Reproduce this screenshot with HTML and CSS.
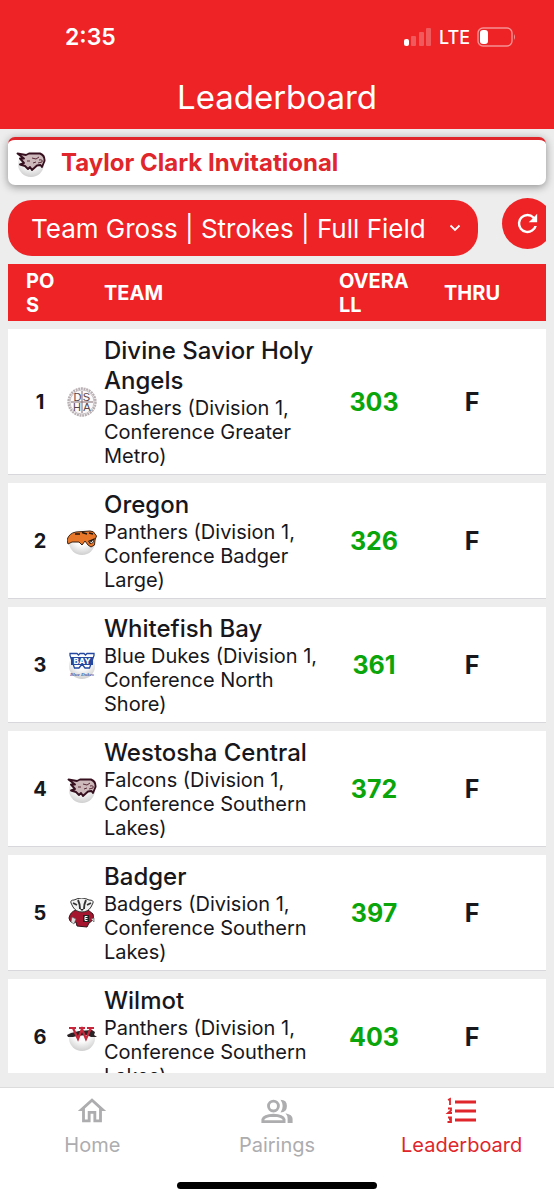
FILE: index.html
```html
<!DOCTYPE html>
<html lang="en">
<head>
  <meta charset="UTF-8">
  <meta name="viewport" content="width=device-width, initial-scale=1">
  <title>Leaderboard</title>
  <link rel="stylesheet" href="styles.css">
</head>
<body>
  <!-- shared logos -->
  <svg class="defs" width="0" height="0" aria-hidden="true">
    <defs>
      <radialGradient id="ball" cx="50%" cy="30%" r="70%">
        <stop offset="0.5" stop-color="#fbfbfb"/>
        <stop offset="1" stop-color="#cfcfcf"/>
      </radialGradient>
      <symbol id="falcon" viewBox="0 0 30 30">
        <circle cx="15" cy="16" r="13" fill="url(#ball)"/>
        <path d="M1.500 5.500 L10 7 L13 5.500 L24 5.500 Q29 7.500 28.500 13 L26 19 L24.500 17 L21 17.500 L16 22 L14 19 L12 21 L9 18 L4 16.500 L8 15 L4 10.500 L8 10.500 Z" fill="#cdb9bc" stroke="#36101f" stroke-width="1.900" stroke-linejoin="round"/>
        <path d="M16 10 L20 11 L23 9 M11 13 L14 13 M23 12 Q27 11 26 14 L22 15 M17 15 L20 14" fill="none" stroke="#5a2a38" stroke-width="1"/>
      </symbol>
    </defs>
  </svg>

  <header class="top">
    <div class="status">
      <span class="time">2:35</span>
      <div class="signals">
        <svg width="28" height="18" viewBox="0 0 28 18" fill="#fff">
          <rect x="0" y="11" width="5" height="7" rx="2"/>
          <g opacity="0.25">
            <rect x="7" y="8" width="5" height="10" rx="1"/>
            <rect x="15" y="4" width="5" height="14" rx="1"/>
            <rect x="22" y="0" width="5" height="18" rx="1"/>
          </g>
        </svg>
        <span class="network">LTE</span>
        <svg width="40" height="20" viewBox="0 0 40 20">
          <rect x="1" y="1" width="34" height="18" rx="5" fill="none" stroke="#fff" stroke-opacity="0.5" stroke-width="1.4"/>
          <path d="M37 7 Q39 10 37 13 Z" fill="#fff" fill-opacity="0.5"/>
          <rect x="3" y="3" width="8" height="14" rx="3" fill="#fff"/>
        </svg>
      </div>
    </div>
    <h1>Leaderboard</h1>
  </header>

  <main>
    <div class="event">
      <svg class="logo" viewBox="0 0 30 30"><use href="#falcon"/></svg>
      <h2>Taylor Clark Invitational</h2>
    </div>

    <div class="filters">
      <div class="picker">
        <select aria-label="Leaderboard view">
          <option>Team Gross | Strokes | Full Field</option>
        </select>
        <svg width="12" height="8" viewBox="0 0 12 8"><path d="M1.500 1.500 L6 6 L10.500 1.500" fill="none" stroke="#fff" stroke-width="1.8"/></svg>
      </div>
      <button class="refresh" aria-label="Refresh">
        <svg width="29" height="29" viewBox="0 0 24 24" fill="#fff"><path d="M17.650 6.350A7.960 7.960 0 0 0 12 4a8 8 0 1 0 7.730 10h-2.080A6 6 0 1 1 12 6c1.660 0 3.140.690 4.220 1.780L13 11h7V4l-2.350 2.350z"/></svg>
      </button>
    </div>

    <div class="board">
      <table>
        <thead>
          <tr>
            <th class="pos">POS</th>
            <th class="mark"></th>
            <th class="team">TEAM</th>
            <th class="overall">OVERALL</th>
            <th class="thru">THRU</th>
          </tr>
        </thead>
        <tbody>
          <tr>
            <td class="pos">1</td>
            <td class="mark">
              <svg class="logo" viewBox="0 0 30 30">
                <circle cx="15" cy="15" r="13.500" fill="#fff" stroke="#b9b0b4" stroke-width="2.400" stroke-dasharray="2 0.700"/>
                <circle cx="15" cy="15" r="12" fill="#fbf9fa" stroke="#a79da2" stroke-width="0.600"/>
                <path d="M15 4 V26 M4 15 H26" stroke="#806a70" stroke-width="1"/>
                <g font-family="Liberation Sans, sans-serif" font-size="11" fill="#57464e" text-anchor="middle">
                  <text x="10.500" y="13.500">D</text><text x="19.500" y="13.500">S</text>
                  <text x="10" y="24">H</text><text x="20" y="24">A</text>
                </g>
              </svg>
            </td>
            <td class="team"><div class="name">Divine Savior Holy Angels</div><div class="info">Dashers (Division 1, Conference Greater Metro)</div></td>
            <td class="overall">303</td>
            <td class="thru">F</td>
          </tr>
          <tr>
            <td class="pos">2</td>
            <td class="mark">
              <svg class="logo" viewBox="0 0 30 30">
                <circle cx="15" cy="16" r="13" fill="url(#ball)"/>
                <path d="M0 14 Q2 7 9 6 L23 5 Q27 5 28 8 L29.500 10 L28 14 L27.500 19 L24 21 L21 19 L18 15 L15 19 L12 16 L5 16 L1 18 Z" fill="#e8772a" stroke="#3c2313" stroke-width="1"/>
                <path d="M8 8 L13 8 M15 6.500 L20 8 M22 7 L26 8" stroke="#24170f" stroke-width="1.400"/>
                <path d="M21 15 L28 12 L26 17 L23 18 Z" fill="#24170f"/>
                <path d="M23 15.500 L24.500 17 L26 14.500" fill="none" stroke="#fff" stroke-width="1"/>
              </svg>
            </td>
            <td class="team"><div class="name">Oregon</div><div class="info">Panthers (Division 1, Conference Badger Large)</div></td>
            <td class="overall">326</td>
            <td class="thru">F</td>
          </tr>
          <tr>
            <td class="pos">3</td>
            <td class="mark">
              <svg class="logo" viewBox="0 0 30 30">
                <circle cx="15" cy="16" r="13" fill="url(#ball)"/>
                <path d="M3 3.500 H10 L11.500 5 L13 3.500 H17 L18.500 5 L20 3.500 H27 V5.500 L22.500 18 H18 L15 14 L12 18 H7.500 L3 5.500 Z" fill="#fff" stroke="#2448a0" stroke-width="1.300"/>
                <rect x="4" y="7" width="22" height="8" fill="#2448a0"/>
                <text x="15" y="14" font-family="Inter, sans-serif" font-size="8" font-weight="800" fill="#fff" text-anchor="middle">BAY</text>
                <text x="15" y="26" font-family="Liberation Serif, serif" font-size="5" font-style="italic" font-weight="700" fill="#3d63b0" text-anchor="middle">Blue Dukes</text>
              </svg>
            </td>
            <td class="team"><div class="name">Whitefish Bay</div><div class="info">Blue Dukes (Division 1, Conference North Shore)</div></td>
            <td class="overall">361</td>
            <td class="thru">F</td>
          </tr>
          <tr>
            <td class="pos">4</td>
            <td class="mark"><svg class="logo" viewBox="0 0 30 30"><use href="#falcon"/></svg></td>
            <td class="team"><div class="name">Westosha Central</div><div class="info">Falcons (Division 1, Conference Southern Lakes)</div></td>
            <td class="overall">372</td>
            <td class="thru">F</td>
          </tr>
          <tr>
            <td class="pos">5</td>
            <td class="mark">
              <svg class="logo" viewBox="0 0 30 30">
                <path d="M9 12 Q3 14 2 20 Q3 26 9 24 L10 28 L20 29 L22 25 Q28 22 26 16 L21 12 Z" fill="#a5162e" stroke="#341319" stroke-width="1"/>
                <path d="M4 5 Q3 2 7 2 Q15 -2 22 2 Q27 2 26 5 L24 9 Q21 14 15 14 Q9 14 6 9 Z" fill="#f2f2f2" stroke="#333" stroke-width="1"/>
                <path d="M11 2 Q13 6 13 11 M19 2 Q17 6 17 11 M6 5 L10 7 M24 5 L20 7" fill="none" stroke="#333" stroke-width="1.900"/>
                <path d="M13 11 H17 L15 13 Z" fill="#222"/>
                <rect x="16" y="17" width="6" height="7" fill="#222"/>
                <path d="M18 18.500 V22.500 M18 18.500 H20.500 M18 20.500 H20.500 M18 22.500 H20.500" stroke="#fff" stroke-width="1"/>
                <path d="M5 19 L9 21 L7 26 L4 24 Z M24 21 L27 20 L27 24 Z" fill="#ddd" stroke="#555" stroke-width="0.600"/>
              </svg>
            </td>
            <td class="team"><div class="name">Badger</div><div class="info">Badgers (Division 1, Conference Southern Lakes)</div></td>
            <td class="overall">397</td>
            <td class="thru">F</td>
          </tr>
          <tr>
            <td class="pos">6</td>
            <td class="mark">
              <svg class="logo" viewBox="0 0 30 30">
                <circle cx="15" cy="16" r="13" fill="url(#ball)"/>
                <path d="M0 13 L4 11 L12 9 L25 8 L28 10 L27 13 L30 15 L24 15 L20 13 L10 14 L6 15 L1 15 Z" fill="#2a2224"/>
                <path d="M2 6 H9 M12 6 H18 M20 6 H27 M6 6 L11 17 L15 7 L19 17 L24 6" fill="none" stroke="#c7263a" stroke-width="2.200"/>
              </svg>
            </td>
            <td class="team"><div class="name">Wilmot</div><div class="info">Panthers (Division 1, Conference Southern Lakes)</div></td>
            <td class="overall">403</td>
            <td class="thru">F</td>
          </tr>
        </tbody>
      </table>
    </div>
  </main>

  <nav class="tabs">
    <a href="#home">
      <svg width="34" height="34" viewBox="0 0 24 24" fill="currentColor"><path d="M12 5.690l5 4.500V18h-2v-6H9v6H7v-7.810l5-4.500M12 3L2 12h3v8h6v-6h2v6h6v-8h3L12 3z"/></svg>
      <span>Home</span>
    </a>
    <a href="#pairings">
      <svg width="38" height="34" viewBox="0 0 26 24" fill="none" stroke="currentColor" stroke-width="2">
        <circle cx="10.500" cy="8.500" r="3.500"/>
        <path d="M3 19.500 V18 Q4 15.200 10.500 15 Q17 15.200 18 18 V19.500 Z"/>
        <path d="M15.500 4 Q20 4 20 8.500 Q20 13 15.500 13 Q18.500 8.500 15.500 4 Z M19 13.500 Q24 14.500 24 17.500 V20.500 H20.500 V17.500 Q20.500 15 19 13.500 Z" fill="currentColor" stroke="none"/>
      </svg>
      <span>Pairings</span>
    </a>
    <a href="#leaderboard" class="active">
      <svg width="34" height="34" viewBox="0 0 34 34" fill="none" stroke="currentColor">
        <path d="M10 8 H31 M10 17 H31 M10 26 H31" stroke-width="3"/>
        <path d="M3 6 L5 5 V11 M3 14.500 H6 V16.500 L3 19 H7 M3 23.500 H6 V25.500 H4 M6 25.500 V28 H2.500" stroke-width="1.800"/>
      </svg>
      <span>Leaderboard</span>
    </a>
  </nav>
  <div class="home-bar"></div>
</body>
</html>
```
FILE: styles.css
```css
* {
  box-sizing: border-box;
}
body {
  margin: 0;
  height: 100vh;
  display: flex;
  flex-direction: column;
  background: #ededee;
  color: #17171c;
  font-family: Inter, "Liberation Sans", sans-serif;
}
h1, h2 {
  margin: 0;
}
.defs {
  position: absolute;
}

/* header */
.top {
  background: #ed2326;
  color: #fff;
}
.status {
  display: flex;
  justify-content: space-between;
  align-items: center;
  height: 66px;
  padding: 8px 37px 0 65px;
}
.time {
  font-size: 23px;
  font-weight: 600;
}
.signals {
  display: flex;
  align-items: center;
  gap: 7px;
}
.network {
  font-size: 18px;
  font-weight: 500;
}
h1 {
  font-size: 33px;
  font-weight: 400;
  line-height: 63px;
  text-align: center;
}

main {
  flex: 1;
  min-height: 0;
  display: flex;
  flex-direction: column;
  padding: 8px 8px 14px;
}
.logo {
  display: block;
  width: 30px;
  height: 30px;
}

.event {
  display: flex;
  align-items: center;
  gap: 15px;
  height: 48px;
  padding: 0 8px;
  background: #fff;
  border-top: 3px solid #e0252b;
  border-radius: 7px;
  box-shadow: 0 2px 8px rgba(0, 0, 0, 0.4);
}
.event h2 {
  font-size: 24px;
  font-weight: 700;
  line-height: 30px;
  color: #e0252b;
}

/* filter row, the refresh button runs off the edge */
.filters {
  display: flex;
  align-items: flex-end;
  gap: 24px;
  margin-top: 13px;
  overflow: hidden;
}
.picker {
  flex: 1;
  display: flex;
  align-items: center;
  padding-right: 17px;
  background: #ed2326;
  border-radius: 24px;
}
.picker select {
  flex: 1;
  min-width: 0;
  height: 56px;
  padding: 0 0 0 23px;
  border: 0;
  background: none;
  color: #fff;
  font-family: inherit;
  font-size: 26px;
  appearance: none;
}
.refresh {
  display: flex;
  flex: none;
  align-items: center;
  justify-content: center;
  align-self: flex-start;
  width: 51px;
  height: 51px;
  margin: 0 -7px 7px 0;
  padding: 0;
  border: 0;
  border-radius: 50%;
  background: #ed2326;
}

/* leaderboard */
.board {
  flex: 1;
  min-height: 0;
  overflow: auto;
  scrollbar-width: none;
}
table {
  width: 100%;
  table-layout: fixed;
  border-collapse: separate;
  border-spacing: 0 8px;
}
th {
  padding: 5px 0 4px;
  background: #ed2326;
  color: #fff;
  font-size: 20px;
  font-weight: 700;
  line-height: 24px;
  text-align: left;
  word-break: break-all;
}
td {
  padding: 7px 0 6px;
  background: #fff;
  border-bottom: 1px solid #d8d8dc;
}
.pos {
  width: 58px;
  padding-left: 18px;
  padding-right: 10px;
}
.mark {
  width: 38px;
  padding-left: 1px;
}
.overall {
  width: 90px;
  padding-left: 10px;
  padding-right: 10px;
}
.thru {
  width: 127px;
  padding-right: 21px;
  text-align: center;
}
td.pos {
  padding-right: 12px;
  font-size: 20px;
  font-weight: 700;
  text-align: center;
}
td.overall {
  color: #0aa50a;
  font-size: 25px;
  font-weight: 700;
  text-align: center;
}
td.thru {
  font-size: 25px;
  font-weight: 700;
}
.name {
  font-size: 24px;
  font-weight: 500;
  line-height: 30px;
}
.info {
  font-size: 20px;
  line-height: 24px;
}

/* bottom tabs */
.tabs {
  display: grid;
  grid-template-columns: repeat(3, 1fr);
  padding-top: 6px;
  background: #fff;
  border-top: 1px solid #dcdcdc;
}
.tabs a {
  display: flex;
  flex-direction: column;
  align-items: center;
  gap: 4px;
  height: 88px;
  color: #adadaf;
  font-size: 20px;
  line-height: 26px;
  text-decoration: none;
}
.tabs .active {
  color: #e0252b;
}
.home-bar {
  height: 18px;
  background: #fff;
}
.home-bar::before {
  content: "";
  display: block;
  width: 36%;
  height: 7px;
  margin: 0 auto;
  border-radius: 4px;
  background: #000;
}
```
